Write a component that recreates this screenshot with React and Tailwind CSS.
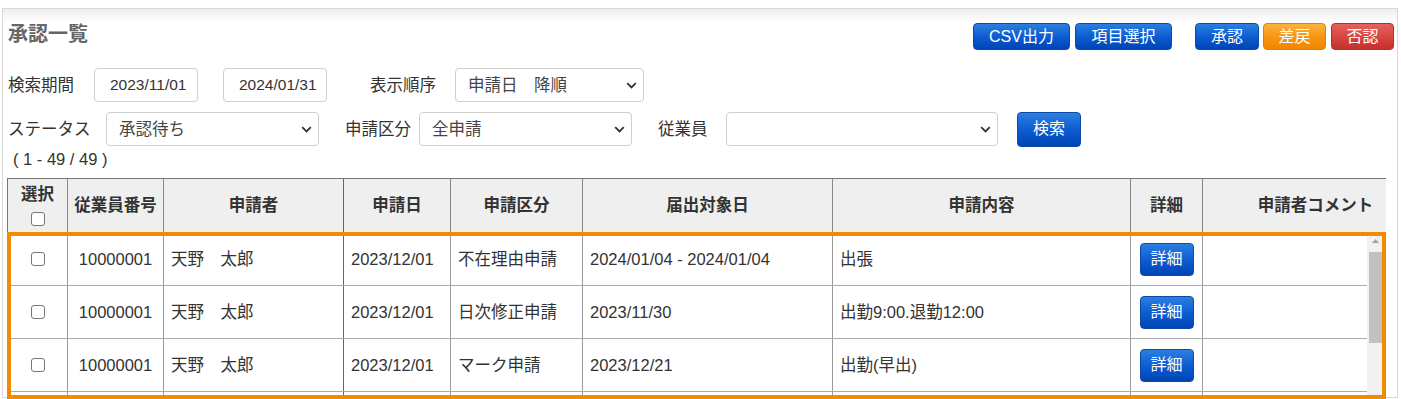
import React from 'react'

const FONT = "font-['Liberation_Sans','Noto_Sans_CJK_JP',sans-serif]"

const HEAD = [
  { label: '申請者', w: 'w-[180px]', border: 'border-[#666]' },
  { label: '申請日', w: 'w-[107px]' },
  { label: '申請区分', w: 'w-[132px]' },
  { label: '届出対象日', w: 'w-[250px]' },
  { label: '申請内容', w: 'w-[298px]' },
  { label: '詳細', w: 'w-[72px]' },
]

const ROWS = [
  { no: '10000001', name: '天野　太郎', date: '2023/12/01', kind: '不在理由申請', target: '2024/01/04 - 2024/01/04', body: '出張' },
  { no: '10000001', name: '天野　太郎', date: '2023/12/01', kind: '日次修正申請', target: '2023/11/30', body: '出勤9:00.退勤12:00' },
  { no: '10000001', name: '天野　太郎', date: '2023/12/01', kind: 'マーク申請', target: '2023/12/21', body: '出勤(早出)' },
  { no: '', name: '', date: '', kind: '', target: '', body: '', partial: true },
]

const BLUE = 'bg-[linear-gradient(to_bottom,#2a7fe0,#0b5ad0_55%,#0044b4)] border border-[#0b4aa6]'

function Btn({ children, className = '', tone = BLUE }) {
  return (
    <button className={`flex shrink-0 items-center justify-center rounded-[4px] text-[16px] text-white ${tone} ${className}`}>
      {children}
    </button>
  )
}

function Check() {
  return <span className="block h-[14px] w-[14px] rounded-[3px] border border-[#767676] bg-white" />
}

function Chevron() {
  return (
    <svg width="11" height="7" viewBox="0 0 11 7" className="shrink-0">
      <path d="M1.2 1.2 L5.5 5.5 L9.8 1.2" fill="none" stroke="#333" strokeWidth="1.8" />
    </svg>
  )
}

function Select({ value, className }) {
  return (
    <div className={`flex h-[34px] shrink-0 items-center justify-between rounded-[4px] border border-[#cfcfcf] bg-white pl-[12px] pr-[6px] text-[16.5px] text-[#444] ${className}`}>
      <span>{value}</span>
      <Chevron />
    </div>
  )
}

function DateBox({ value, className = '' }) {
  return (
    <div className={`flex h-[34px] w-[104px] shrink-0 items-center rounded-[4px] border border-[#cfcfcf] bg-white pl-[15px] text-[15.5px] text-[#333] ${className}`}>
      {value}
    </div>
  )
}

function Scrollbar() {
  return (
    <div className="flex w-[17px] shrink-0 flex-col items-center bg-[#f1f1f1]">
      <svg width="9" height="17" viewBox="0 0 9 17" className="shrink-0">
        <path d="M1 10 L4.5 6 L8 10 Z" fill="#a3a3a3" />
      </svg>
      <div className="mt-[2px] h-[91px] w-[13px] bg-[#c1c1c1]" />
    </div>
  )
}

export default function App() {
  return (
    <div className={`relative h-[399px] w-[1401px] overflow-hidden bg-white text-[#333] ${FONT}`}>
      <div className="ml-[2px] mt-[8px] flex h-[390px] w-[1396px] flex-col border border-[#d9d9d9] bg-[linear-gradient(to_bottom,#eeeeee,#ffffff_14px)] pl-[4px] pr-[3px]">
        {/* title + actions */}
        <div className="mt-[14px] flex h-[27px] items-start justify-between">
          <h1 className="ml-[1px] text-[20px] font-bold leading-[22px] text-[#666]">承認一覧</h1>
          <div className="flex items-center">
            <Btn className="h-[27px] w-[97px]">CSV出力</Btn>
            <Btn className="ml-[5px] h-[27px] w-[97px]">項目選択</Btn>
            <Btn className="ml-[23px] h-[27px] w-[64px]">承認</Btn>
            <Btn
              className="ml-[4px] h-[27px] w-[63px]"
              tone="bg-[linear-gradient(to_bottom,#fbb23e,#f7940f_55%,#f28700)] border border-[#e08000]"
            >
              差戻
            </Btn>
            <Btn
              className="ml-[5px] h-[27px] w-[63px]"
              tone="bg-[linear-gradient(to_bottom,#e4625e,#d6443f_55%,#c5302b)] border border-[#b82d29]"
            >
              否認
            </Btn>
          </div>
        </div>

        {/* search row 1 */}
        <div className="mt-[18px] flex h-[34px] items-center text-[16.5px]">
          <span className="ml-[1px] w-[86px] shrink-0">検索期間</span>
          <DateBox value="2023/11/01" />
          <DateBox value="2024/01/31" className="ml-[25px]" />
          <span className="ml-[43px] w-[85px] shrink-0">表示順序</span>
          <Select value="申請日　降順" className="w-[189px]" />
        </div>

        {/* search row 2 */}
        <div className="mt-[10px] flex h-[34px] items-center text-[16.5px]">
          <span className="ml-[1px] w-[98px] shrink-0">ステータス</span>
          <Select value="承認待ち" className="w-[213px]" />
          <span className="ml-[26px] w-[74px] shrink-0">申請区分</span>
          <Select value="全申請" className="w-[213px]" />
          <span className="ml-[26px] w-[68px] shrink-0">従業員</span>
          <Select value="" className="w-[272px]" />
          <Btn className="ml-[19px] h-[35px] w-[64px]">検索</Btn>
        </div>

        <div className="ml-[6px] mt-[4px] text-[16.5px] leading-[18px]">( 1 - 49 / 49 )</div>

        {/* table */}
        <div className="mt-[10px] flex w-[1379px] flex-col">
          <div className="flex h-[55px] border-l border-t border-b border-[#777] bg-[#efefef] text-[16.5px] font-bold">
            <div className="flex w-[60px] shrink-0 flex-col items-center border-r border-[#888] pt-[5px]">
              <span className="leading-[20px]">選択</span>
              <span className="mt-[8px]">
                <Check />
              </span>
            </div>
            <div className="flex w-[96px] shrink-0 items-center justify-center border-r border-[#888]">従業員番号</div>
            {HEAD.map((h) => (
              <div
                key={h.label}
                className={`flex ${h.w} shrink-0 items-center justify-center border-r ${h.border || 'border-[#888]'}`}
              >
                {h.label}
              </div>
            ))}
            <div className="flex w-[183px] shrink-0 items-center justify-center pl-[42px]">申請者コメント</div>
          </div>

          <div className="flex h-[164px] overflow-hidden">
            <div className="flex w-[1360px] shrink-0 flex-col border-l border-[#777] text-[16.5px]">
              {ROWS.map((r, i) => (
                <div key={i} className="flex h-[53px] shrink-0 border-b border-[#aaa]">
                  <div className="flex w-[60px] shrink-0 items-center justify-center border-r border-[#999]">
                    {!r.partial && <Check />}
                  </div>
                  <div className="flex w-[96px] shrink-0 items-center justify-center border-r border-[#999]">{r.no}</div>
                  <div className="flex w-[180px] shrink-0 items-center border-r border-[#666] pl-[7px]">{r.name}</div>
                  <div className="flex w-[107px] shrink-0 items-center border-r border-[#999] pl-[7px]">{r.date}</div>
                  <div className="flex w-[132px] shrink-0 items-center border-r border-[#999] pl-[7px]">{r.kind}</div>
                  <div className="flex w-[250px] shrink-0 items-center border-r border-[#999] pl-[7px]">{r.target}</div>
                  <div className="flex w-[298px] shrink-0 items-center border-r border-[#999] pl-[7px]">{r.body}</div>
                  <div className="flex w-[72px] shrink-0 items-center justify-center border-r border-[#999]">
                    {!r.partial && <Btn className="h-[33px] w-[54px]">詳細</Btn>}
                  </div>
                  <div className="w-[164px] shrink-0" />
                </div>
              ))}
            </div>
            <Scrollbar />
          </div>
        </div>
      </div>

      {/* highlight frame over the list body */}
      <div className="pointer-events-none absolute left-[7px] top-[232px] h-[167px] w-[1379px] border-4 border-[#f08c00]" />
    </div>
  )
}
